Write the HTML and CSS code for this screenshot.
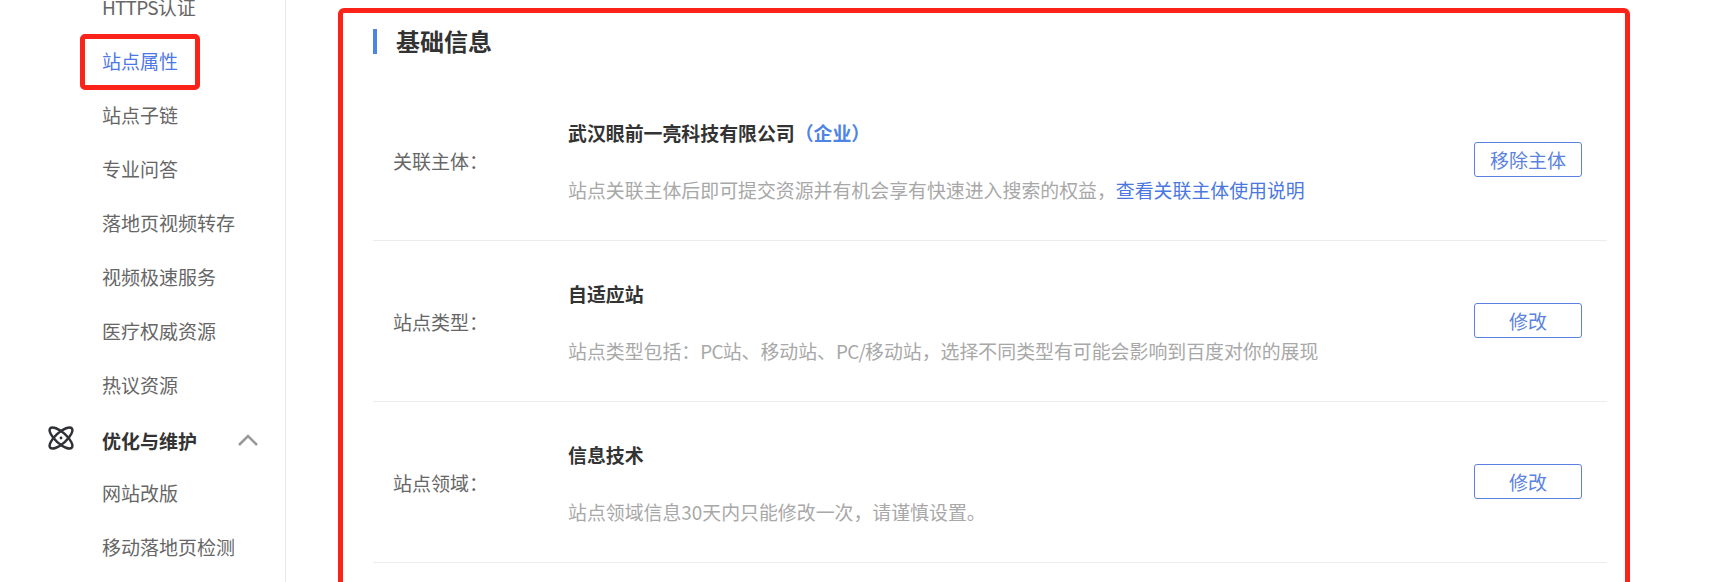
FILE: index.html
```html
<!DOCTYPE html>
<html lang="zh-CN">
<head>
    <meta charset="UTF-8">
    <meta name="viewport" content="width=device-width, initial-scale=1.0">
    <title>站点属性</title>
    <link rel="stylesheet" href="styles.css">
</head>
<body>
    <div class="page">
        <aside class="sidebar">
            <ul class="menu">
                <li class="menu-item"><span class="latin">HTTPS</span>认证</li>
                <li class="menu-item active">站点属性</li>
                <li class="menu-item">站点子链</li>
                <li class="menu-item">专业问答</li>
                <li class="menu-item">落地页视频转存</li>
                <li class="menu-item">视频极速服务</li>
                <li class="menu-item">医疗权威资源</li>
                <li class="menu-item">热议资源</li>
                <li class="menu-group">
                    <svg class="group-icon" viewBox="0 0 26 24" fill="none" stroke="#2f3136" stroke-width="2.5">
                        <ellipse cx="13" cy="12" rx="5.5" ry="14.5" transform="rotate(-48 13 12)"/>
                        <ellipse cx="13" cy="12" rx="5.5" ry="14.5" transform="rotate(48 13 12)"/>
                        <circle cx="13" cy="12" r="1.4" fill="#2f3136" stroke="none"/>
                    </svg>
                    <span class="group-name">优化与维护</span>
                    <svg class="group-arrow" viewBox="0 0 20 12" fill="none" stroke="#999" stroke-width="2.6">
                        <path d="M1 11 L10 2 L19 11"/>
                    </svg>
                </li>
                <li class="menu-item">网站改版</li>
                <li class="menu-item">移动落地页检测</li>
            </ul>
        </aside>

        <main class="content">
            <section class="panel">
                <h2 class="panel-title">基础信息</h2>

                <div class="row">
                    <div class="row-label">关联主体：</div>
                    <div class="row-body">
                        <div class="row-value">武汉眼前一亮科技有限公司<span class="tag">（企业）</span></div>
                        <div class="row-desc">站点关联主体后即可提交资源并有机会享有快速进入搜索的权益，<a class="link" href="#">查看关联主体使用说明</a></div>
                    </div>
                    <button class="btn">移除主体</button>
                </div>

                <div class="row">
                    <div class="row-label">站点类型：</div>
                    <div class="row-body">
                        <div class="row-value">自适应站</div>
                        <div class="row-desc">站点类型包括：<span class="latin">PC</span>站、移动站、<span class="latin">PC/</span>移动站，选择不同类型有可能会影响到百度对你的展现</div>
                    </div>
                    <button class="btn">修改</button>
                </div>

                <div class="row">
                    <div class="row-label">站点领域：</div>
                    <div class="row-body">
                        <div class="row-value">信息技术</div>
                        <div class="row-desc">站点领域信息30天内只能修改一次，请谨慎设置。</div>
                    </div>
                    <button class="btn">修改</button>
                </div>
            </section>
        </main>
    </div>
</body>
</html>
```

FILE: styles.css
```css
* { margin: 0; padding: 0; box-sizing: border-box; }
html, body { height: 100%; overflow: hidden; background: #fff; }
body { font-family: "Noto Sans CJK SC", "Liberation Sans", sans-serif; color: #333; }
.page { display: flex; height: 582px; overflow: hidden; }
.latin { letter-spacing: -0.8px; }

.sidebar { width: 286px; flex-shrink: 0; border-right: 1px solid #e8e8e8; }
.menu { list-style: none; margin-top: -20px; }
.menu-item { position: relative; height: 54px; line-height: 54px; padding-left: 102px; font-size: 19px; color: #666; }
.menu-item.active { color: #4e78e6; }
.menu-item.active::after { content: ""; box-sizing: border-box; position: absolute; left: 80px; top: 0; width: 120px; height: 56px; border: 5px solid #fb2319; border-radius: 5px; }
.menu-group { display: flex; align-items: center; height: 54px; padding-left: 48px; padding-top: 2px; }
.group-icon { width: 26px; height: 24px; margin-bottom: 4px; }
.group-name { margin-left: 28px; font-size: 19px; font-weight: 700; color: #333; }
.group-arrow { width: 20px; height: 12px; margin-left: 41px; }

.content { flex: 1; padding: 8px 85px 0 52px; }
.panel { height: 620px; padding: 16px 18px 0 30px; border: 5px solid #fb2319; border-radius: 6px; }
.panel-title { height: 25px; margin-bottom: 26px; padding-left: 19px; border-left: 4px solid #4e84e6; font-size: 24px; line-height: 23px; font-weight: 700; color: #333; }

.row { display: flex; align-items: center; height: 161px; border-bottom: 1px solid #ececec; padding-right: 25px; padding-bottom: 1px; }
.row-label { width: 195px; padding: 2px 0 0 20px; font-size: 19px; color: #666; }
.row-body { flex: 1; display: flex; flex-direction: column; gap: 30px; padding-top: 2px; }
.row-value { font-size: 18.9px; line-height: 27px; font-weight: 700; color: #333; }
.tag { color: #4e84e6; }
.row-desc { font-size: 18.9px; line-height: 27px; color: #a8a8a8; }
.link { color: #4a78e0; text-decoration: none; }
.btn { width: 108px; height: 35px; border: 1px solid #5b82e0; border-radius: 3px; background: #fff; color: #5b82e0; font-family: inherit; font-size: 19px; line-height: 33px; cursor: pointer; }
```
